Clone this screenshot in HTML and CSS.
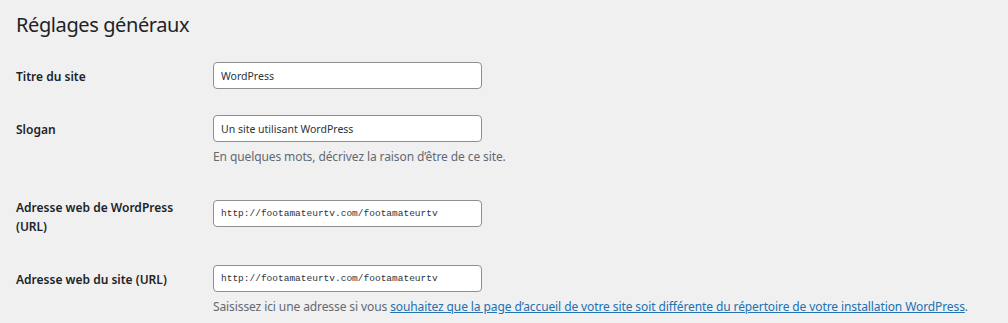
FILE: index.html
```html
<!DOCTYPE html>
<html lang="fr">
<head>
    <meta charset="UTF-8">
    <meta name="viewport" content="width=device-width, initial-scale=1.0">
    <title>Réglages généraux</title>
    <link rel="stylesheet" href="styles.css">
</head>
<body>
    <div class="wrap">
        <h1>Réglages généraux</h1>

        <form class="settings-form">
            <table class="form-table">
                <tr>
                    <th><label for="blogname">Titre du site</label></th>
                    <td><input id="blogname" class="regular-text" type="text" value="WordPress"></td>
                </tr>
                <tr>
                    <th><label for="blogdescription">Slogan</label></th>
                    <td>
                        <input id="blogdescription" class="regular-text" type="text" value="Un site utilisant WordPress">
                        <p class="description">En quelques mots, décrivez la raison d’être de ce site.</p>
                    </td>
                </tr>
                <tr>
                    <th><label for="siteurl">Adresse web de WordPress (URL)</label></th>
                    <td class="cell-tall"><input id="siteurl" class="regular-text code" type="url" value="http://footamateurtv.com/footamateurtv"></td>
                </tr>
                <tr>
                    <th><label for="home">Adresse web du site (URL)</label></th>
                    <td>
                        <input id="home" class="regular-text code" type="url" value="http://footamateurtv.com/footamateurtv">
                        <p class="description">Saisissez ici une adresse si vous <a href="#">souhaitez que la page d’accueil de votre site soit différente du répertoire de votre installation WordPress</a>.</p>
                    </td>
                </tr>
            </table>
        </form>
    </div>
</body>
</html>
```

FILE: styles.css
```css
body {
    background-color: #f0f0f1;
    color: #1d2327;
    font-family: "Noto Sans", Arial, sans-serif;
    font-size: 12px;
    margin: 0;
}
.wrap {
    padding: 10px 16px 0;
}
h1 {
    font-size: 20px;
    font-weight: 400;
    letter-spacing: -0.4px;
    line-height: 29px;
    margin: 0 0 10px;
}
.form-table {
    width: 100%;
    table-layout: fixed;
    border-collapse: collapse;
}
.form-table th {
    width: 187px;
    padding: 18px 10px 16px 0;
    text-align: left;
    vertical-align: top;
    font-size: 12px;
    font-weight: 600;
    line-height: 19px;
}
.form-table td {
    padding: 13px 0;
    vertical-align: middle;
}
.form-table .cell-tall {
    padding-bottom: 18px;
}
.regular-text {
    box-sizing: border-box;
    width: 269px;
    height: 27px;
    padding: 0 7px;
    border: 1px solid #8c8f94;
    border-radius: 4px;
    background-color: white;
    color: #2c3338;
    font-family: "Noto Sans", Arial, sans-serif;
    font-size: 10.5px;
    display: block;
}
.code {
    font-family: "Liberation Mono", monospace;
    font-size: 9.5px;
}
.description {
    margin: 5px 0 1px;
    color: #646970;
    font-size: 12px;
    letter-spacing: -0.1px;
    line-height: 19px;
    white-space: nowrap;
}
.description a {
    color: #2271b1;
}
```
